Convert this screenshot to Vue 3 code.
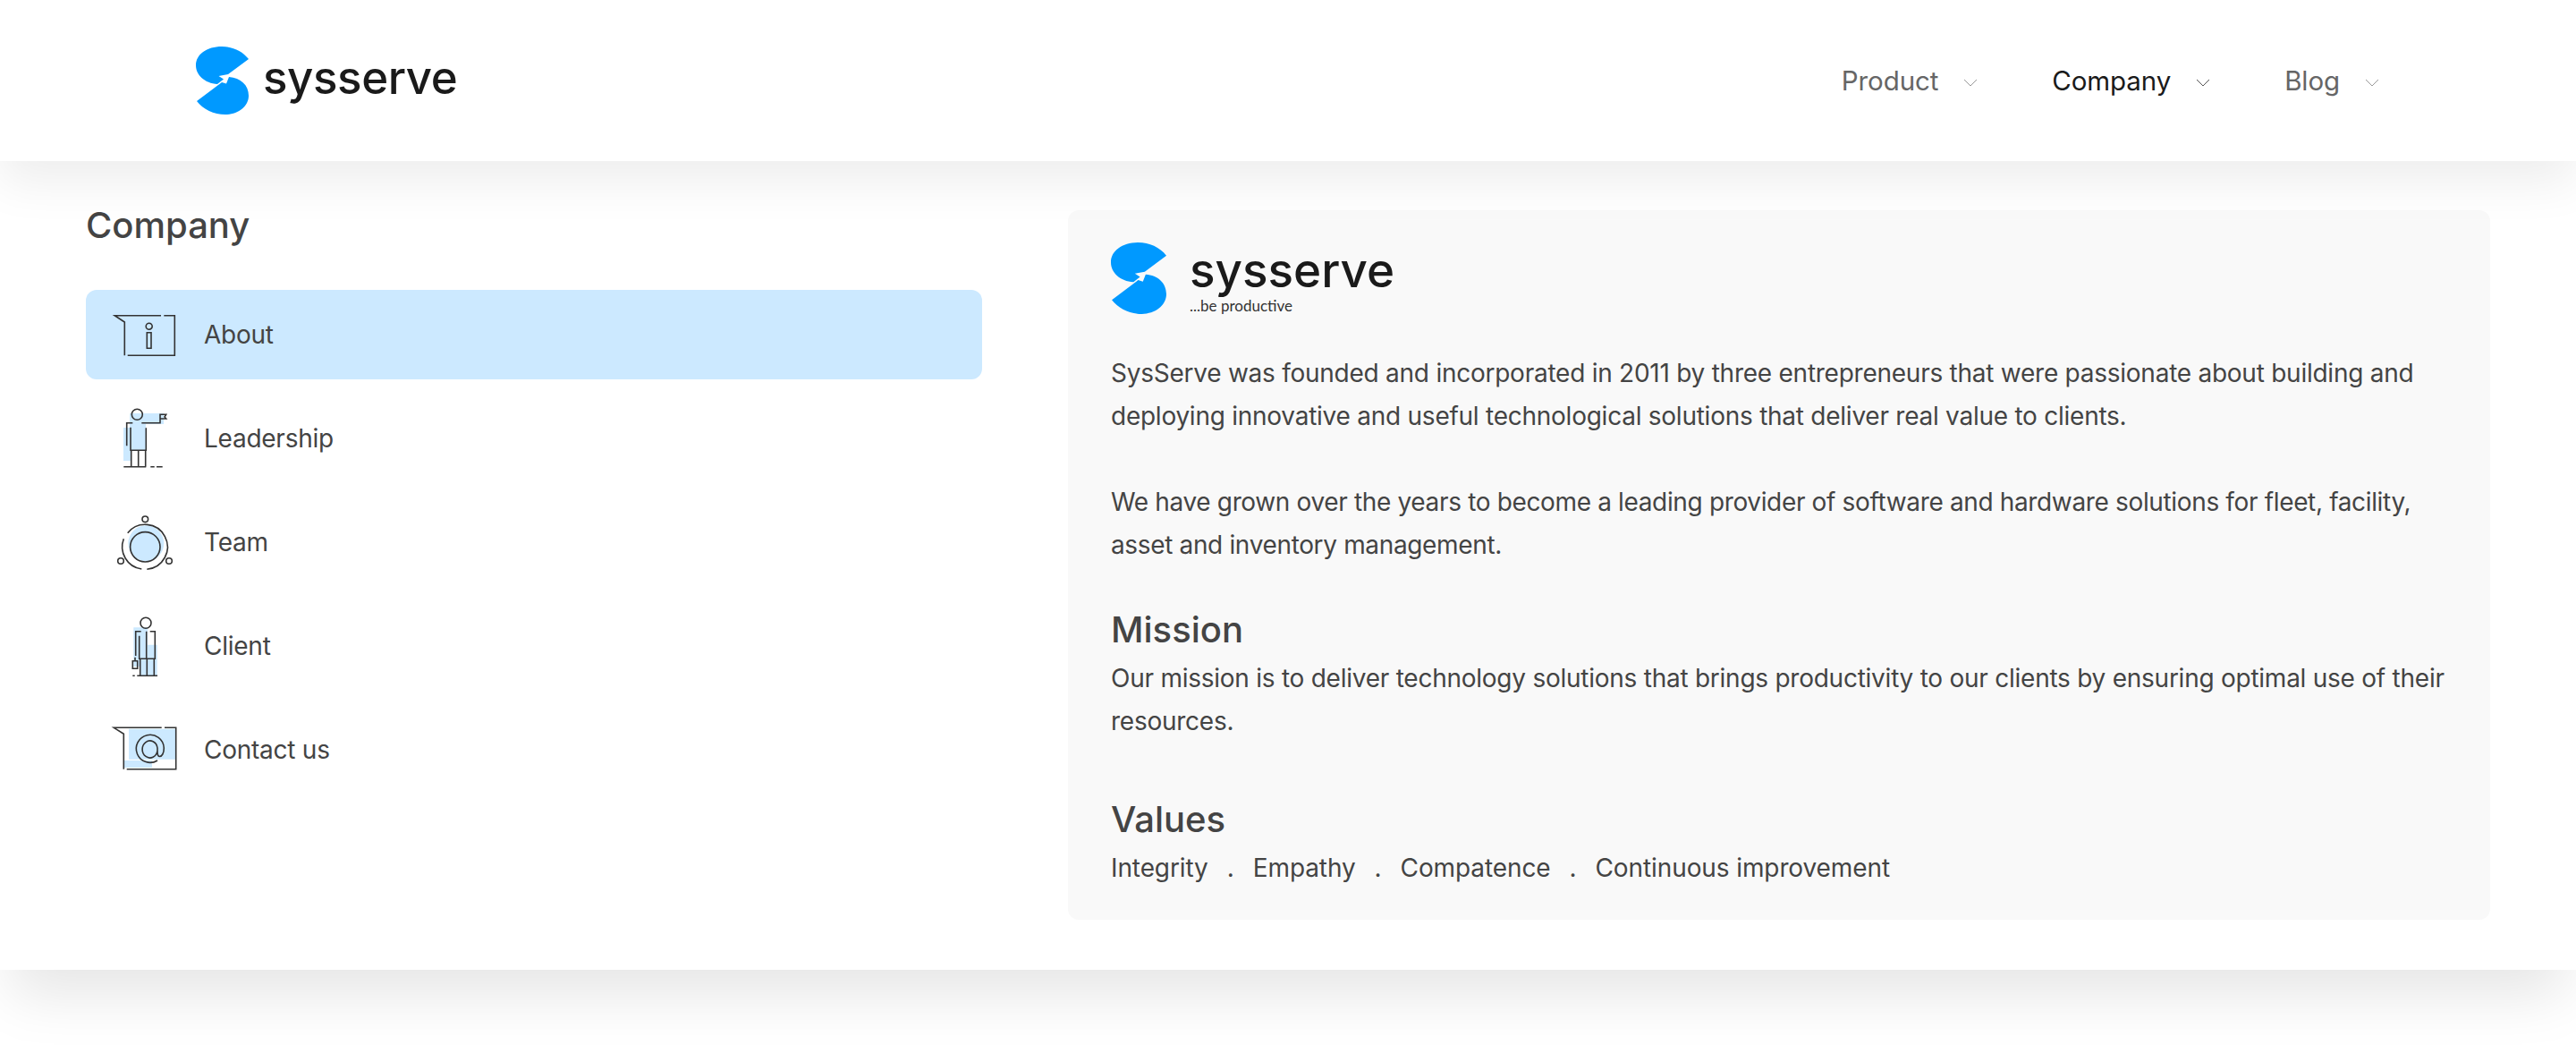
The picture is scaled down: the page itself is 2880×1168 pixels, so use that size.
<script setup>
const logoTop = 'M59 14C52 5 41 0 29 0C12 0 0 9 0 21C0 32 10 41 24 42L31 36.5L25.5 33L36 31Z'
const logoBottom = 'M1 61L29 40L34 41.5L37 34C50 35 59 43 59 55C59 67 47 76 33 76C20 76 8 70 1 61Z'

const nav = [
  { label: 'Product', active: false },
  { label: 'Company', active: true },
  { label: 'Blog', active: false },
]

const circle = (cx, cy, r) => `M${cx - r} ${cy}a${r} ${r} 0 1 0 ${r * 2} 0a${r} ${r} 0 1 0 ${-r * 2} 0`

const menu = [
  {
    label: 'About',
    active: true,
    fill: '',
    stroke: `M60 18.7H8.3L19.3 26V63.3M63.3 18.7H75.3V63.3H22.7 ${circle(46.7, 30.7, 3.5)} M44.3 37.7H49V55.3H44.3Z`,
  },
  {
    label: 'Leadership',
    fill: 'M25 12H43V53H25ZM38 12H63V24H38ZM18 28H26V65H18Z',
    stroke: `${circle(33.3, 13.3, 6)} M38.3 22.7H59V13.3H65.7L64 16L65.7 18H59M26 27.7V53.3H43.3V28.3M21.7 48.3V22.7H28.3M26.7 53.3V71.7M34.7 53.3V71.7M42.7 53.3V71.7M18.3 71.7H43.3M48.3 71.7H52.7M55 71.7H61.7`,
  },
  {
    label: 'Team',
    fill: circle(43.3, 41.3, 20),
    stroke: `${circle(42.3, 45.3, 16.7)} M44.3 70.2A25 25 0 1 0 22.7 29.7M18.3 36.3A25 25 0 0 0 38.3 70 ${circle(42.3, 14.3, 3.3)} ${circle(15, 61, 3.3)} ${circle(69, 61, 3.3)}`,
  },
  {
    label: 'Client',
    fill: 'M29.3 19.3H45V63H29.3ZM43 38.7H55.7V73.3H43ZM36 53H45V73H36Z',
    stroke: `${circle(43, 14.3, 6)} M37.7 23.7H31.7V51M35.7 28.7V54.3H53.3V23.7H47.7M43.7 23.7V54.3M36.7 54.3V73.3M44.3 54.3V73.3M52.3 54.3V73.3M28.3 73.3H30.7M33.3 73.3H56M28.3 56.7H33.7V65.3H28.3ZM31 52.7V56.7`,
  },
  {
    label: 'Contact us',
    fill: 'M24 16.7H76V50.7H24ZM19 52H50V60H19Z',
    stroke: 'M60.7 15.3H7.3L18.3 22.3V61.7M64 15.3H76.7V61.7H21.7M56 52A15.5 15.5 0 1 1 63.3 38C63.3 44 61 47.5 58.5 47.5C56.5 47.5 56 45.5 56 42V38A8.5 9.5 0 1 0 56 41',
  },
]

const values = ['Integrity', 'Empathy', 'Compatence', 'Continuous improvement']
</script>

<template>
  <div class="page">
    <header class="header">
      <div class="brand">
        <svg class="brand-mark" viewBox="0 0 59 76" width="59" height="76">
          <path :d="logoTop" fill="#0099ff" />
          <path :d="logoBottom" fill="#0099ff" />
        </svg>
        <span class="brand-name">sysserve</span>
      </div>
      <nav class="nav">
        <a v-for="item in nav" :key="item.label" class="nav-item" :class="{ active: item.active }">
          <span>{{ item.label }}</span>
          <svg class="chevron" viewBox="0 0 16 9" width="16" height="9">
            <path d="M1 1L8 8L15 1" fill="none" stroke="currentColor" stroke-width="1" />
          </svg>
        </a>
      </nav>
    </header>

    <main class="panel">
      <section class="side">
        <h2 class="side-title">Company</h2>
        <ul class="menu">
          <li v-for="item in menu" :key="item.label" class="menu-row" :class="{ active: item.active }">
            <svg class="menu-icon" viewBox="0 0 80 80" width="80" height="80">
              <path v-if="item.fill" :d="item.fill" fill="#cce9ff" />
              <path :d="item.stroke" fill="none" stroke="#333" stroke-width="1.6" />
            </svg>
            <span>{{ item.label }}</span>
          </li>
        </ul>
      </section>

      <article class="card">
        <div class="card-brand">
          <svg viewBox="0 0 59 76" width="62" height="80">
            <path :d="logoTop" fill="#0099ff" />
            <path :d="logoBottom" fill="#0099ff" />
          </svg>
          <div class="card-brand-text">
            <span class="card-brand-name">sysserve</span>
            <span class="card-brand-tag">...be productive</span>
          </div>
        </div>

        <p class="para first">
          SysServe was founded and incorporated in 2011 by three entrepreneurs that were passionate about building and
          deploying innovative and useful technological solutions that deliver real value to clients.
        </p>
        <p class="para second">
          We have grown over the years to become a leading provider of software and hardware solutions for fleet, facility,
          asset and inventory management.
        </p>

        <h3 class="heading mission">Mission</h3>
        <p class="para">
          Our mission is to deliver technology solutions that brings productivity to our clients by ensuring optimal use of their
          resources.
        </p>

        <h3 class="heading values-title">Values</h3>
        <div class="values">
          <template v-for="(value, i) in values" :key="value">
            <span v-if="i > 0" class="dot">.</span>
            <span>{{ value }}</span>
          </template>
        </div>
      </article>
    </main>
  </div>
</template>

<style scoped>
.page {
  width: 2880px;
  height: 1168px;
  font-family: Inter, "Noto Sans", sans-serif;
  color: #444;
}
.header {
  position: relative;
  z-index: 2;
  height: 180px;
  display: flex;
  align-items: center;
  justify-content: space-between;
  padding: 0 220px 0 219px;
  box-sizing: border-box;
  background: #fff;
  box-shadow: 0 24px 50px rgba(0, 0, 0, 0.07);
}
.brand {
  display: flex;
  align-items: center;
  gap: 16px;
}
.brand-name {
  margin-bottom: 7px;
  font-size: 51px;
  font-weight: 500;
  line-height: 60px;
  color: #1a1a1a;
  letter-spacing: -0.4px;
}
.nav {
  display: flex;
  gap: 83px;
}
.nav-item {
  display: flex;
  align-items: center;
  gap: 28px;
  font-size: 29.5px;
  letter-spacing: -0.1px;
  color: #666;
}
.nav-item.active {
  color: #1a1a1a;
}
.chevron {
  color: #999;
  margin-top: 4px;
}
.nav-item.active .chevron {
  color: #555;
}
.panel {
  display: grid;
  grid-template-columns: 1002px 1590px;
  gap: 96px;
  padding: 55px 96px 56px;
  background: #fff;
  box-shadow: 0 40px 60px -12px rgba(0, 0, 0, 0.1);
}
.side-title {
  margin: -7px 0 48px;
  font-size: 40px;
  line-height: 48px;
  font-weight: 500;
}
.menu {
  margin: 0;
  padding: 0;
  list-style: none;
  display: flex;
  flex-direction: column;
  gap: 16px;
}
.menu-row {
  height: 100px;
  display: flex;
  align-items: center;
  gap: 28px;
  padding-left: 24px;
  border-radius: 12px;
  font-size: 28px;
  letter-spacing: -0.25px;
}
.menu-row.active {
  background: #cce9ff;
}
.card {
  padding: 36px 30px 34px 48px;
  border-radius: 12px;
  background: #f9f9f9;
}
.card-brand {
  display: flex;
  gap: 26px;
}
.card-brand-text {
  display: flex;
  flex-direction: column;
  margin-top: 9px;
}
.card-brand-name {
  font-size: 53px;
  font-weight: 500;
  line-height: 44px;
  color: #1a1a1a;
}
.card-brand-tag {
  margin-top: 9px;
  font-family: Lato, sans-serif;
  font-size: 17px;
  line-height: 18px;
  color: #333;
}
.para {
  margin: 0;
  font-size: 28px;
  line-height: 48px;
  letter-spacing: -0.25px;
}
.para.first {
  margin-top: 42px;
}
.para.second {
  margin-top: 48px;
  letter-spacing: -0.35px;
}
.heading {
  margin: 0 0 6px;
  font-size: 40px;
  line-height: 48px;
  font-weight: 500;
}
.mission {
  margin-top: 47px;
}
.values-title {
  margin-top: 62px;
}
.values {
  display: flex;
  gap: 21px;
  font-size: 28px;
  line-height: 48px;
  letter-spacing: -0.1px;
}
</style>

<style>
html {
  background: #fff;
}
</style>
